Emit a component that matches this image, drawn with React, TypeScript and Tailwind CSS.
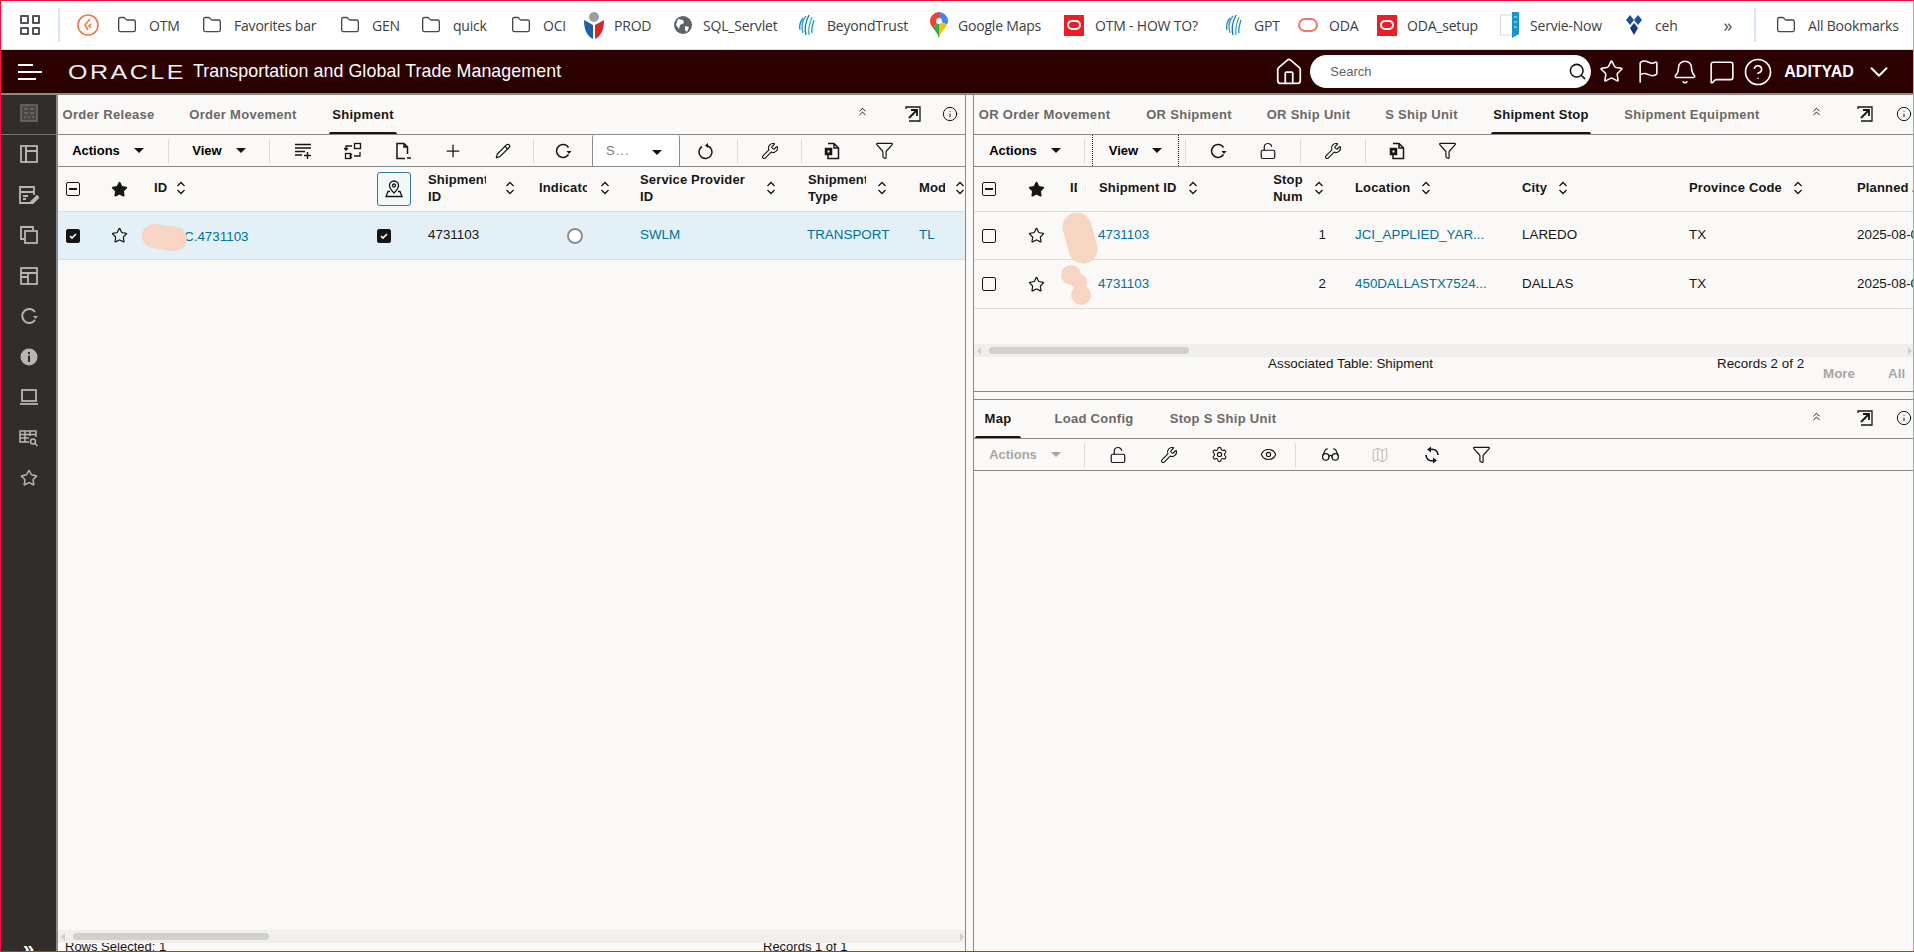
import React from 'react';
import {
  Bell, ChevronDown, ChevronsUp, Eye, Flag, Folder, Funnel, Glasses, Info, LockOpen, Map as MapIcon,
  MessageSquare, Pencil, Plus, Search, Settings, Star, Wrench, CircleHelp, House,
} from 'lucide-react';

const FONT = { fontFamily: '"Liberation Sans", Arial, sans-serif' };

const Clockish = () => (
  <svg width="22" height="28" viewBox="0 0 22 28" fill="none" stroke="#f0784a" strokeWidth="1.6">
    <circle cx="11" cy="14" r="10" />
    <path d="M13 8l-5 6 3 5M14 13l-2 2 2 2" />
  </svg>
);
const OracleTile = () => (
  <span className="flex h-[21px] w-[20px] items-center justify-center bg-[#ee1c25]">
    <span className="h-[10px] w-[14px] rounded-[5px] border-2 border-white" />
  </span>
);
const OdaRing = () => <span className="h-[14px] w-[20px] rounded-[7px] border-2 border-[#f0776a]" />;
const Swirl = ({ size = 20 }: { size?: number }) => (
  <svg width={size} height={size + 4} viewBox="0 0 20 24" fill="none" strokeWidth="1.3">
    <path d="M3 17c-1-4 0-8 3-12" stroke="#1b8fd0" />
    <path d="M6 20c-2-6-1-12 3-17" stroke="#2aa0c8" />
    <path d="M9 22c-2-7 0-14 3-20" stroke="#1a6fb8" />
    <path d="M12 22c-1-7 1-13 3-18" stroke="#39b3a6" />
    <path d="M15 20c-1-5 1-9 2-13" stroke="#1b8fd0" />
  </svg>
);
const ProdIcon = () => (
  <svg width="22" height="30" viewBox="0 0 22 30">
    <circle cx="11" cy="7" r="5" fill="#9a9ea3" />
    <path d="M1 10l9 5v14C4 26 1 20 1 10z" fill="#1f5fa8" />
    <path d="M21 10l-9 5v14c6-3 9-9 9-19z" fill="#d8262c" />
  </svg>
);
const GlobeIcon = () => (
  <svg width="18" height="18" viewBox="0 0 18 18">
    <circle cx="9" cy="9" r="9" fill="#5f6368" />
    <path d="M4 3l5 1 1 3-4 2-1 4-3-4zM11 10l4 1-2 5-2-2z" fill="#fff" />
  </svg>
);
const MapsPin = () => (
  <svg width="18" height="26" viewBox="0 0 18 26">
    <path d="M9 0a9 9 0 0 0-9 9c0 3 1.500 5 3 7l6-7V0z" fill="#ea4335" />
    <path d="M9 0a9 9 0 0 1 9 9c0 1-.3 2.400-1 3.500L9 9z" fill="#4285f4" />
    <path d="M3 16l6-7 8 3.500c-2 4-6 7-8 13.500-1-4-3.500-7-6-10z" fill="#fbbc04" />
    <path d="M3 16l6-7v17c-1-4-3.500-7-6-10z" fill="#34a853" />
    <circle cx="9" cy="9" r="3" fill="#fff" />
  </svg>
);
const SnowDoc = () => (
  <svg width="20" height="26" viewBox="0 0 20 26">
    <rect x="0.500" y="3" width="12" height="20" fill="#fff" stroke="#d5d8dc" />
    <path d="M12 0h7v22l-7 4z" fill="#1795c9" />
    <path d="M14 5h3M14 10h3M14 15h3" stroke="#bfe7f5" />
  </svg>
);
const CehIcon = () => (
  <svg width="18" height="22" viewBox="0 0 18 22">
    <path d="M5 1l4 5-4 5-4-5z" fill="#1a4fa0" />
    <path d="M13 1l4 5-4 5-4-5z" fill="#1a4fa0" />
    <path d="M9 9l4 5-4 7-4-7z" fill="#123a7c" />
  </svg>
);
const BmFolder = () => <Folder size={20} strokeWidth={1.6} className="text-[#45494d]" />;

const bookmarks: { icon: React.ReactNode; label?: string; box: string; gap: string }[] = [
  { icon: <Clockish />, box: 'w-[36px]', gap: 'w-[22px]' },
  { icon: <BmFolder />, label: 'OTM', box: 'w-[85px]', gap: 'w-[28px]' },
  { icon: <BmFolder />, label: 'Favorites bar', box: 'w-[138px]', gap: 'w-[28px]' },
  { icon: <BmFolder />, label: 'GEN', box: 'w-[81px]', gap: 'w-[28px]' },
  { icon: <BmFolder />, label: 'quick', box: 'w-[90px]', gap: 'w-[28px]' },
  { icon: <BmFolder />, label: 'OCI', box: 'w-[75px]', gap: 'w-[28px]' },
  { icon: <ProdIcon />, label: 'PROD', box: 'w-[89px]', gap: 'w-[24px]' },
  { icon: <GlobeIcon />, label: 'SQL_Servlet', box: 'w-[124px]', gap: 'w-[24px]' },
  { icon: <Swirl />, label: 'BeyondTrust', box: 'w-[132px]', gap: 'w-[24px]' },
  { icon: <MapsPin />, label: 'Google Maps', box: 'w-[134px]', gap: 'w-[23px]' },
  { icon: <OracleTile />, label: 'OTM - HOW TO?', box: 'w-[160px]', gap: 'w-[26px]' },
  { icon: <Swirl />, label: 'GPT', box: 'w-[74px]', gap: 'w-[25px]' },
  { icon: <OdaRing />, label: 'ODA', box: 'w-[79px]', gap: 'w-[26px]' },
  { icon: <OracleTile />, label: 'ODA_setup', box: 'w-[123px]', gap: 'w-[25px]' },
  { icon: <SnowDoc />, label: 'Servie-Now', box: 'w-[124px]', gap: 'w-[25px]' },
  { icon: <CehIcon />, label: 'ceh', box: 'w-[97px]', gap: 'w-[26px]' },
];

const BookmarkBar = () => (
  <div className="flex h-[49px] shrink-0 items-center border-b border-[#dadce0] bg-white text-[14px] text-[#3c4043]" style={{ fontFamily: '"Open Sans", "Noto Sans", sans-serif' }}>
    <div className="ml-[19px] grid h-[20px] w-[20px] grid-cols-2 gap-[3px]">
      <span className="rounded-[1px] border-2 border-[#50545a]" />
      <span className="rounded-[1px] border-2 border-[#50545a]" />
      <span className="rounded-[1px] border-2 border-[#50545a]" />
      <span className="rounded-[1px] border-2 border-[#50545a]" />
    </div>
    <span className="ml-[18px] mr-[17px] h-[34px] w-[2px] bg-[#d3e3fd]" />
    {bookmarks.map((b, i) => (
      <div key={i} className={`flex shrink-0 items-center ${b.box}`}>
        <span className={`flex shrink-0 items-center justify-center ${b.gap}`}>{b.icon}</span>
        {b.label && <span className="ml-[8px] whitespace-nowrap tracking-[-0.2px]">{b.label}</span>}
      </div>
    ))}
    <span className="ml-[0px] w-[20px] text-center text-[18px] leading-none text-[#50545a]">»</span>
    <span className="ml-[16px] mr-[20px] h-[34px] w-[2px] bg-[#d3e3fd]" />
    <BmFolder />
    <span className="ml-[12px] whitespace-nowrap tracking-[-0.2px]">All Bookmarks</span>
  </div>
);

const AppHeader = () => (
  <div className="flex h-[43px] shrink-0 items-center bg-[#2a0000] text-white" style={FONT}>
    <div className="ml-[17px] flex w-[25px] flex-col gap-[5px]">
      <span className="h-[2px] w-[15px] bg-white" />
      <span className="h-[2px] w-[24px] bg-white" />
      <span className="h-[2px] w-[18px] bg-white" />
    </div>
    <span className="ml-[25px] w-[125px] origin-left scale-x-[1.25] text-[20px] leading-none tracking-[2px] text-[#f1efed]">
      ORACLE
    </span>
    <span className="whitespace-nowrap text-[17.8px] tracking-[0.1px]">Transportation and Global Trade Management</span>
    <House size={30} strokeWidth={1.4} className="ml-[713px]" />
    <div className="ml-[6px] flex h-[33px] w-[281px] items-center rounded-full bg-white pl-[20px] pr-[4px] text-[13px] text-[#646464]">
      <span>Search</span>
      <Search size={19} strokeWidth={2} className="ml-auto text-[#161513]" />
    </div>
    <Star size={25} strokeWidth={1.5} className="ml-[8px]" />
    <Flag size={25} strokeWidth={1.5} className="ml-[12px]" />
    <Bell size={26} strokeWidth={1.4} className="ml-[11px]" />
    <MessageSquare size={26} strokeWidth={1.5} className="ml-[11px]" />
    <CircleHelp size={30} strokeWidth={1.3} className="ml-[8px]" />
    <span className="ml-[11px] text-[16px] font-bold">ADITYAD</span>
    <ChevronDown size={30} strokeWidth={1.6} className="ml-[10px]" />
  </div>
);

const TableIcon = () => (
  <svg width="18" height="18" viewBox="0 0 18 18" fill="none" stroke="currentColor" strokeWidth="1.800">
    <rect x="1" y="1" width="16" height="16" />
    <path d="M1 6h16M1 10h7M8 6v11" />
  </svg>
);

const sideIcons: React.ReactNode[] = [
  <svg width="18" height="18" viewBox="0 0 18 18" fill="none" stroke="currentColor" strokeWidth="1.800">
    <rect x="1" y="1" width="5" height="16" />
    <rect x="6" y="1" width="11" height="5" />
    <rect x="6" y="6" width="11" height="11" />
  </svg>,
  <svg width="20" height="18" viewBox="0 0 20 18" fill="none" stroke="currentColor" strokeWidth="1.800">
    <path d="M13 17H1V1h14v8M1 6h14M4 10h5M4 13h3" />
    <path d="M12 16l6-6 1.500 1.500-6 6h-1.500z" fill="currentColor" />
  </svg>,
  <svg width="18" height="18" viewBox="0 0 18 18" fill="none" stroke="currentColor" strokeWidth="1.800">
    <path d="M4 13H1V1h12v3" />
    <rect x="5" y="5" width="12" height="12" />
  </svg>,
  <TableIcon />,
  <svg width="18" height="18" viewBox="0 0 18 18" fill="none" stroke="currentColor" strokeWidth="2">
    <path d="M15 13a7 7 0 1 1 0-8" />
    <path d="M13 9h5l-2.500 3z" fill="currentColor" stroke="none" />
  </svg>,
  <svg width="18" height="18" viewBox="0 0 18 18">
    <circle cx="9" cy="9" r="8.500" fill="currentColor" />
    <rect x="8" y="7.500" width="2" height="6.500" fill="#312d2a" />
    <rect x="8" y="4" width="2" height="2" fill="#312d2a" />
  </svg>,
  <svg width="18" height="18" viewBox="0 0 18 18" fill="none" stroke="currentColor" strokeWidth="1.800">
    <rect x="2" y="2" width="14" height="11" />
    <path d="M0 16h18" />
  </svg>,
  <svg width="20" height="18" viewBox="0 0 20 18" fill="none" stroke="currentColor" strokeWidth="1.500">
    <path d="M10 13H1V2h16v6M1 5.500h16M1 9h9M6 2v11M11 2v5" />
    <circle cx="14" cy="12.500" r="2.500" />
    <path d="M16 14.500l2.500 2.500" />
  </svg>,
  <Star size={18} strokeWidth={2} />,
];

const Sidebar = () => (
  <aside className="flex h-full w-[55px] shrink-0 flex-col items-center border-r-0 bg-[#312d2a] text-[#b8b6b3]">
    <div className="flex h-[40px] w-full shrink-0 items-center justify-center border-b border-[#77736f] pb-[3px] text-[#6f6c69]">
      <svg width="18" height="18" viewBox="0 0 18 18" fill="#4a4744" stroke="currentColor" strokeWidth="1.500">
        <rect x="1" y="1" width="16" height="16" />
        <path d="M4 5h4M10 5h4M4 9h4M10 9h4M4 13h2M8 13h2M12 13h2" />
      </svg>
    </div>
    <div className="mt-[10px] flex flex-col items-center gap-[22px]">
      {sideIcons.map((icon, i) => (
        <span key={i} className="flex h-[18.500px] items-center justify-center">{icon}</span>
      ))}
    </div>
    <span className="mt-auto text-[20px] font-bold leading-[6px] text-white">»</span>
  </aside>
);

const Caret = ({ muted }: { muted?: boolean }) => (
  <span className={`inline-block h-0 w-0 border-x-[5px] border-t-[5px] border-x-transparent ${muted ? 'border-t-[#a8a6a3]' : 'border-t-[#161513]'}`} />
);

const Sep = () => <span className="h-[24px] w-[1px] shrink-0 bg-[#dcdbd9]" />;

const Slot = ({ w, children, className = '' }: { w: string; children?: React.ReactNode; className?: string }) => (
  <span className={`flex h-full shrink-0 items-center justify-center ${w} ${className}`}>{children}</span>
);

const Refresh = () => (
  <svg width="18" height="18" viewBox="0 0 18 18" fill="none" stroke="#161513" strokeWidth="1.500">
    <path d="M14.500 12.500a6.500 6.500 0 1 1 0-7" />
    <path d="M12.500 9h5l-2.500 3z" fill="#161513" stroke="none" />
  </svg>
);
const Undo = () => (
  <svg width="18" height="18" viewBox="0 0 18 18" fill="none" stroke="#161513" strokeWidth="1.500">
    <path d="M5 4.500a6.500 6.500 0 1 0 6-.500" />
    <path d="M11 1v5l-3-2.500z" fill="#161513" stroke="none" />
  </svg>
);
const DocExport = () => (
  <svg width="18" height="18" viewBox="0 0 18 18" fill="none" stroke="#161513" strokeWidth="1.500">
    <path d="M4 1.500h6l4.500 4.500v10.500H4V13M10 1.500V6h4.500" />
    <rect x="1.500" y="6.500" width="6" height="6" fill="#161513" />
    <rect x="3.500" y="8.500" width="2" height="2" fill="#fff" stroke="none" />
  </svg>
);
const AddRows = () => (
  <svg width="18" height="18" viewBox="0 0 18 18" fill="none" stroke="#161513" strokeWidth="1.400">
    <path d="M1 2.500h16M1 6h16M1 9.500h10M1 13h7M13.500 10v7M10 13.500h7" />
  </svg>
);
const Transform = () => (
  <svg width="18" height="18" viewBox="0 0 18 18" fill="none" stroke="#161513" strokeWidth="1.300">
    <rect x="10.500" y="1.500" width="6" height="5" />
    <rect x="1.500" y="11.500" width="5" height="5" />
    <path d="M8 4H2v4M0 6l2 2 2-2M10 14h6v-4M8 12l-2 2 2 2" />
  </svg>
);
const DocMinus = () => (
  <svg width="18" height="18" viewBox="0 0 18 18" fill="none" stroke="#161513" strokeWidth="1.500">
    <path d="M11 16.500H3v-15h7l3.500 3.500v7M10 1.500V5h3.500M13 16h4" />
  </svg>
);
const Sync = () => (
  <svg width="18" height="18" viewBox="0 0 18 18" fill="none" stroke="#161513" strokeWidth="1.500">
    <path d="M6 4a6 6 0 0 1 9 5" />
    <path d="M12 14a6 6 0 0 1-9-5" />
    <path d="M8 0.500v6L4 3.500zM10 17.500v-6l4 3z" fill="#161513" stroke="none" />
  </svg>
);

const WrenchIcon = () => <Wrench size={18} strokeWidth={1.500} className="text-[#161513]" />;
const FilterIcon = () => <Funnel size={19} strokeWidth={1.500} className="text-[#161513]" />;
const UnlockIcon = () => <LockOpen size={18} strokeWidth={1.600} className="text-[#161513]" />;

const SortIcon = () => (
  <svg width="10" height="14" viewBox="0 0 10 14" fill="none" stroke="#161513" strokeWidth="1.300" className="shrink-0">
    <path d="M1.500 5L5 1.500 8.500 5M1.500 9L5 12.500 8.500 9" />
  </svg>
);

const Check = ({ state }: { state: 'on' | 'off' | 'minus' }) => (
  <span
    className={`flex h-[14px] w-[14px] shrink-0 items-center justify-center rounded-[2px] border border-[#161513] ${state === 'on' ? 'bg-[#161513]' : 'bg-transparent'}`}
  >
    {state === 'on' && (
      <svg width="10" height="10" viewBox="0 0 10 10" fill="none" stroke="#fff" strokeWidth="1.600">
        <path d="M2 5l2 2 4-4" />
      </svg>
    )}
    {state === 'minus' && <span className="h-[1.500px] w-[8px] bg-[#161513]" />}
  </span>
);

const StarCell = ({ filled }: { filled?: boolean }) => (
  <Star size={17} strokeWidth={1.700} className={`text-[#161513] ${filled ? 'fill-[#161513]' : ''}`} />
);

const Tab = ({ label, active, w, className = '' }: { label: string; active?: boolean; w: string; className?: string }) => (
  <span className={`relative flex h-full shrink-0 items-center justify-center whitespace-nowrap text-[13px] font-bold tracking-[0.3px] ${w} ${active ? 'text-[#161513]' : 'text-[#6a6866]'} ${className}`}>
    {label}
    {active && <span className="absolute inset-x-[0px] bottom-0 h-[2px] rounded-t-sm bg-[#161513]" />}
  </span>
);

const PanelActions = ({ offset, gapA, gapB }: { offset: string; gapA: string; gapB: string }) => (
  <div className={`ml-auto flex items-center text-[#161513] ${offset}`}>
    <ChevronsUp size={13} strokeWidth={1.800} className="mb-[6px]" />
    <svg width="16" height="16" viewBox="0 0 16 16" fill="none" stroke="#161513" strokeWidth="1.300" className={`mb-[2px] ${gapA}`}>
      <path d="M1 3V1h14v14H4" />
      <path d="M4 12l8-8M6 4h6v6" strokeWidth="1.800" />
    </svg>
    <Info size={16} strokeWidth={1.500} className={`mb-[2px] ${gapB}`} />
  </div>
);

const Hd = ({ cls, children }: { cls: string; children: React.ReactNode }) => (
  <div className={`flex h-full shrink-0 items-center px-[8px] pb-[3px] text-[13px] font-bold leading-[17px] tracking-[0.15px] text-[#161513] ${cls}`}>{children}</div>
);

const Cell = ({ cls, children, link }: { cls: string; children?: React.ReactNode; link?: boolean }) => (
  <div className={`flex h-full shrink-0 items-center overflow-hidden whitespace-nowrap px-[8px] text-[13.4px] ${link ? 'text-[#006f99]' : 'text-[#161513]'} ${cls}`}>{children}</div>
);

const Clip = ({ w, children }: { w: string; children: React.ReactNode }) => (
  <span className={`block overflow-hidden whitespace-nowrap ${w}`}>{children}</span>
);

const Scrollbar = ({ thumb, offset }: { thumb: string; offset: string }) => (
  <div className="flex h-[13px] shrink-0 items-center bg-[#f0efed]">
    <span className="ml-[3px] h-0 w-0 border-y-[4px] border-r-[4px] border-y-transparent border-r-[#cfcecc]" />
    <span className={`h-[7px] rounded-full bg-[#d1d0ce] ${thumb} ${offset}`} />
    <span className="ml-auto mr-[1px] h-0 w-0 border-y-[4px] border-l-[4px] border-y-transparent border-l-[#cfcecc]" />
  </div>
);

const LeftPanel = () => (
  <section className="flex h-full w-[907px] shrink-0 flex-col border-r-0 bg-[#fbf9f8]">
    <div className="flex h-[40px] shrink-0 items-center border-b border-[#8b8a88]">
      <Tab label="Order Release" w="w-[101px]" />
      <Tab label="Order Movement" w="w-[136px]" className="ml-[16px]" />
      <Tab label="Shipment" w="w-[68px]" active className="ml-[18px]" />
      <PanelActions offset="mr-[7px]" gapA="ml-[36px]" gapB="ml-[21px]" />
    </div>
    <div className="flex h-[32px] shrink-0 items-center border-b border-[#8b8a88]">
      <Slot w="w-[110px]" className="gap-[14px] pr-[10px] text-[13px] font-bold"><span>Actions</span><Caret /></Slot>
      <Sep />
      <Slot w="w-[100px]" className="gap-[14px] text-[13px] font-bold"><span>View</span><Caret /></Slot>
      <Sep />
      <Slot w="w-[8px]" />
      <Slot w="w-[50px]"><AddRows /></Slot>
      <Slot w="w-[50px]"><Transform /></Slot>
      <Slot w="w-[50px]"><DocMinus /></Slot>
      <Slot w="w-[50px]"><Plus size={20} strokeWidth={1.500} className="text-[#161513]" /></Slot>
      <Slot w="w-[50px]"><Pencil size={16} strokeWidth={1.800} className="text-[#161513]" /></Slot>
      <Slot w="w-[5px]" />
      <Sep />
      <Slot w="w-[58px]"><Refresh /></Slot>
      <div className="flex h-full w-[88px] shrink-0 items-center rounded-t-[3px] border-x border-[#8b8a88] bg-white pl-[13px] pr-[17px] text-[13px] tracking-[1px] text-[#7c7a78]">
        <span>S...</span>
        <span className="ml-auto"><Caret /></span>
      </div>
      <Slot w="w-[51px]"><Undo /></Slot>
      <Slot w="w-[6px]" />
      <Sep />
      <Slot w="w-[63px]"><WrenchIcon /></Slot>
      <Sep />
      <Slot w="w-[62px]"><DocExport /></Slot>
      <Slot w="w-[40px]"><FilterIcon /></Slot>
    </div>
    <div className="flex h-[45px] shrink-0 items-center border-b border-[#dcdbd9]">
      <Cell cls="w-[40px]"><Check state="minus" /></Cell>
      <div className="flex h-full w-[48px] shrink-0 items-center justify-center pr-[6px]"><StarCell filled /></div>
      <Hd cls="w-[224px] gap-[9px]"><span>ID</span><SortIcon /></Hd>
      <div className="flex h-full w-[50px] shrink-0 items-center pl-[7px]">
        <span className="flex h-[34px] w-[34px] items-center justify-center rounded-[3px] border border-[#2c7da0] bg-[#f5f8f9]">
          <svg width="20" height="20" viewBox="0 0 20 20" fill="none" stroke="#161513" strokeWidth="1.300">
            <path d="M10 14S5.500 9.500 5.500 6.500a4.500 4.500 0 0 1 9 0C14.500 9.500 10 14 10 14z" />
            <circle cx="10" cy="6.500" r="1.500" />
            <path d="M6 12.500H4l-2 5h16l-2-5h-2" />
          </svg>
        </span>
      </div>
      <Hd cls="w-[111px] gap-[19px]"><Clip w="w-[58px]">Shipment<br />ID</Clip><SortIcon /></Hd>
      <Hd cls="w-[101px] gap-[13px]"><Clip w="w-[48px]">Indicator</Clip><SortIcon /></Hd>
      <Hd cls="w-[168px] justify-between pr-[24px]"><span className="w-[110px]">Service Provider ID</span><SortIcon /></Hd>
      <Hd cls="w-[111px] gap-[11px]"><Clip w="w-[58px]">Shipment<br />Type</Clip><SortIcon /></Hd>
      <Hd cls="w-[54px] gap-[10px] pr-0"><Clip w="w-[26px]">Mode</Clip><SortIcon /></Hd>
    </div>
    <div className="flex h-[48px] shrink-0 items-center border-b border-[#d3dde2] bg-[#e3f0f7]">
      <Cell cls="w-[40px]"><Check state="on" /></Cell>
      <div className="flex h-full w-[48px] shrink-0 items-center justify-center pr-[6px]"><StarCell /></div>
      <div className="relative h-full w-[224px] shrink-0">
        <span className="absolute left-[38px] top-[15px] text-[13.4px] text-[#006f99]">C.4731103</span>
        <svg width="60" height="47" className="absolute left-0 top-0 overflow-visible" fill="none" stroke="#f7d5c3" strokeLinecap="round">
          <path d="M8 24l21 3" strokeWidth="24" />
        </svg>
      </div>
      <div className="flex h-full w-[50px] shrink-0 items-center pl-[7px]"><Check state="on" /></div>
      <Cell cls="w-[111px]">4731103</Cell>
      <div className="flex h-full w-[101px] shrink-0 items-center pl-[36px]">
        <span className="h-[16px] w-[16px] rounded-full border-2 border-[#8f8e8c] bg-white" />
      </div>
      <Cell cls="w-[168px]" link>SWLM</Cell>
      <Cell cls="w-[111px] pl-[7px]" link>TRANSPORT</Cell>
      <Cell cls="w-[54px]" link>TL</Cell>
    </div>
    <div className="flex-1" />
    <Scrollbar thumb="w-[196px]" offset="ml-[8px]" />
    <div className="flex h-[8px] shrink-0 overflow-hidden pl-[7px] text-[13px] leading-[14px] text-[#161513]">
      <span className="w-[698px] -translate-y-[3px]">Rows Selected: 1</span>
      <span className="-translate-y-[3px]">Records 1 of 1</span>
    </div>
  </section>
);

const StopRow = ({ num, loc, city, blob, h }: { num: string; loc: string; city: string; blob: React.ReactNode; h: string }) => (
  <div className={`flex shrink-0 items-center border-b border-[#dcdbd9] ${h}`}>
    <Cell cls="w-[40px]"><Check state="off" /></Cell>
    <div className="flex h-full w-[48px] shrink-0 items-center justify-center pr-[4px]"><StarCell /></div>
    <div className="relative h-full w-[29px] shrink-0">{blob}</div>
    <Cell cls="w-[173px] pl-[7px]" link>4731103</Cell>
    <Cell cls="w-[83px] justify-end pr-[21px]">{num}</Cell>
    <Cell cls="w-[167px]" link>{loc}</Cell>
    <Cell cls="w-[167px]">{city}</Cell>
    <Cell cls="w-[168px]">TX</Cell>
    <Cell cls="w-[64px] pr-0">2025-08-04</Cell>
  </div>
);

const RightPanel = () => (
  <section className="flex h-full w-[939px] shrink-0 flex-col bg-[#fbf9f8]">
    <div className="flex h-[40px] shrink-0 items-center border-b border-[#8b8a88]">
      <Tab label="OR Order Movement" w="w-[131px]" className="ml-[5px]" />
      <Tab label="OR Shipment" w="w-[86px]" className="ml-[36px]" />
      <Tab label="OR Ship Unit" w="w-[83px]" className="ml-[35px]" />
      <Tab label="S Ship Unit" w="w-[71px]" className="ml-[36px]" />
      <Tab label="Shipment Stop" w="w-[100px]" active className="ml-[34px]" />
      <Tab label="Shipment Equipment" w="w-[134px]" className="ml-[34px]" />
      <PanelActions offset="mr-[1px]" gapA="ml-[34px]" gapB="ml-[23px]" />
    </div>
    <div className="flex h-[32px] shrink-0 items-center border-b border-[#8b8a88]">
      <Slot w="w-[110px]" className="gap-[14px] pr-[8px] text-[13px] font-bold"><span>Actions</span><Caret /></Slot>
      <Sep />
      <Slot w="w-[7px]" />
      <Slot w="w-[87px]" className="gap-[14px] border-x border-dotted border-[#161513] text-[13px] font-bold"><span>View</span><Caret /></Slot>
      <Slot w="w-[6px]" />
      <Sep />
      <Slot w="w-[64px]"><Refresh /></Slot>
      <Slot w="w-[36px]"><UnlockIcon /></Slot>
      <Slot w="w-[14px]" />
      <Sep />
      <Slot w="w-[64px]"><WrenchIcon /></Slot>
      <Sep />
      <Slot w="w-[63px]"><DocExport /></Slot>
      <Slot w="w-[36px]"><FilterIcon /></Slot>
    </div>
    <div className="flex h-[45px] shrink-0 items-center border-b border-[#dcdbd9]">
      <Cell cls="w-[40px]"><Check state="minus" /></Cell>
      <div className="flex h-full w-[48px] shrink-0 items-center justify-center pr-[4px]"><StarCell filled /></div>
      <Hd cls="w-[29px]"><Clip w="w-[7px]">ID</Clip></Hd>
      <Hd cls="w-[173px] gap-[11px]"><span className="whitespace-nowrap">Shipment ID</span><SortIcon /></Hd>
      <Hd cls="w-[83px] gap-[11px] pl-[9px]"><span className="w-[30px] text-center">Stop Num</span><SortIcon /></Hd>
      <Hd cls="w-[167px] gap-[11px]"><span>Location</span><SortIcon /></Hd>
      <Hd cls="w-[167px] gap-[11px]"><span>City</span><SortIcon /></Hd>
      <Hd cls="w-[168px] gap-[11px]"><span className="whitespace-nowrap">Province Code</span><SortIcon /></Hd>
      <Hd cls="w-[64px] overflow-hidden whitespace-nowrap pr-0"><Clip w="w-[56px]">Planned Arrival</Clip></Hd>
    </div>
    <StopRow
      h="h-[48px]"
      num="1"
      loc="JCI_APPLIED_YAR..."
      city="LAREDO"
      blob={
        <svg width="29" height="48" className="absolute left-0 top-0 overflow-visible" fill="none" stroke="#f7d5c3" strokeLinecap="round">
          <path d="M15 15l6 22" strokeWidth="29" />
        </svg>
      }
    />
    <StopRow
      h="h-[49px]"
      num="2"
      loc="450DALLASTX7524..."
      city="DALLAS"
      blob={
        <svg width="29" height="48" className="absolute left-0 top-0 overflow-visible" fill="#f7d5c3">
          <circle cx="9" cy="15" r="10" />
          <circle cx="17" cy="22" r="8" />
          <circle cx="19" cy="35" r="10" />
        </svg>
      }
    />
    <div className="h-[35px] shrink-0" />
    <Scrollbar thumb="w-[200px]" offset="ml-[8px]" />
    <div className="flex h-[34px] shrink-0 text-[13.4px] leading-[14px] text-[#161513]">
      <span className="ml-[294px] w-[449px]">Associated Table: Shipment</span>
      <span className="w-[106px] whitespace-nowrap">Records 2 of 2</span>
      <span className="mt-[10px] w-[65px] font-bold text-[#a8a6a3]">More</span>
      <span className="mt-[10px] font-bold text-[#a8a6a3]">All</span>
    </div>
    <div className="h-[9px] shrink-0 border-y border-[#8b8a88]" />
    <div className="flex h-[39px] shrink-0 items-center border-b border-[#8b8a88]">
      <Tab label="Map" w="w-[46px]" active className="ml-[1px]" />
      <Tab label="Load Config" w="w-[78px]" className="ml-[34px]" />
      <Tab label="Stop S Ship Unit" w="w-[106px]" className="ml-[37px]" />
      <PanelActions offset="mr-[1px]" gapA="ml-[34px]" gapB="ml-[23px]" />
    </div>
    <div className="flex h-[32px] shrink-0 items-center border-b border-[#8b8a88]">
      <Slot w="w-[110px]" className="gap-[14px] pr-[8px] text-[13px] font-bold text-[#a8a6a3]"><span>Actions</span><Caret muted /></Slot>
      <Sep />
      <Slot w="w-[14px]" />
      <Slot w="w-[38px]"><UnlockIcon /></Slot>
      <Slot w="w-[13px]" />
      <Slot w="w-[38px]"><WrenchIcon /></Slot>
      <Slot w="w-[12px]" />
      <Slot w="w-[38px]"><Settings size={17} strokeWidth={1.600} className="text-[#161513]" /></Slot>
      <Slot w="w-[11px]" />
      <Slot w="w-[38px]"><Eye size={17} strokeWidth={1.600} className="text-[#161513]" /></Slot>
      <Slot w="w-[8px]" />
      <Sep />
      <Slot w="w-[68px]"><Glasses size={19} strokeWidth={1.500} className="text-[#161513]" /></Slot>
      <Slot w="w-[32px]"><MapIcon size={18} strokeWidth={1.300} className="text-[#b5b3b0]" /></Slot>
      <Slot w="w-[72px]"><Sync /></Slot>
      <Slot w="w-[26px]"><FilterIcon /></Slot>
    </div>
    <div className="flex-1" />
  </section>
);

export default function App() {
  return (
    <div className="flex h-[952px] w-[1914px] flex-col overflow-hidden border border-x-[#f0143c] border-y-[#f0143c] border-r-[#ee8aa0] bg-[#fbf9f8]" style={FONT}>
      <BookmarkBar />
      <AppHeader />
      <div className="flex min-h-0 flex-1 border-t-2 border-[#8b8a88]">
        <Sidebar />
        <span className="w-[2px] shrink-0 bg-[#8b8a88]" />
        <LeftPanel />
        <div className="h-full w-[9px] shrink-0 border-x border-[#8b8a88] bg-[#fbf9f8]" />
        <RightPanel />
      </div>
    </div>
  );
}
